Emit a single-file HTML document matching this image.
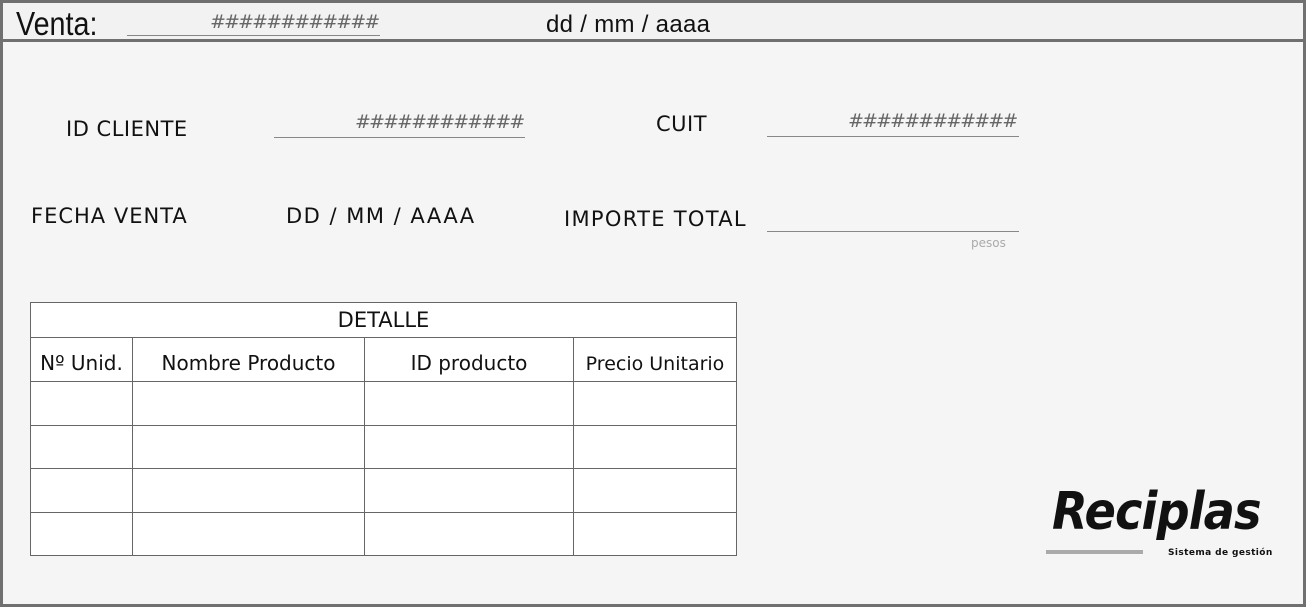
<!DOCTYPE html>
<html><head><meta charset="utf-8"><style>
*{margin:0;padding:0;box-sizing:border-box}
body{width:1306px;height:607px;background:#f5f5f5;font-family:"DejaVu Sans","Liberation Sans",sans-serif;color:#111;position:relative;overflow:hidden}
.frame{position:absolute;left:0;top:0;width:1306px;height:607px;border:3px solid #707070}
.hdr{position:absolute;left:3px;top:3px;width:1300px;height:39px;background:#f2f2f2;border-bottom:3px solid #707070}
.t{position:absolute;white-space:nowrap}
.ln{position:absolute;height:1px;background:#888}
.hash{position:absolute;font-style:italic;color:#666;font-size:19px;white-space:nowrap;letter-spacing:-1.9px}
table{position:absolute;left:30px;top:302px;border-collapse:collapse;font-size:20px}
td{border:1px solid #666;text-align:center;background:#fff;padding:0}
</style></head><body>
<div class="hdr"></div>
<div class="frame"></div>
<div class="t" style="left:16px;top:5px;font-size:33px;font-family:'Liberation Sans',sans-serif;transform:scaleX(0.87);transform-origin:left">Venta:</div>
<div class="ln" style="left:127px;top:35px;width:253px"></div>
<div class="hash" style="left:210px;top:11px">############</div>
<div class="t" style="left:546px;top:11px;font-size:24px;font-family:'Liberation Sans',sans-serif;letter-spacing:0.3px">dd / mm / aaaa</div>

<div class="t" style="left:66px;top:117px;font-size:21px;letter-spacing:0.5px">ID CLIENTE</div>
<div class="ln" style="left:274px;top:137px;width:251px"></div>
<div class="hash" style="left:355px;top:111px">############</div>
<div class="t" style="left:656px;top:112px;font-size:21px;letter-spacing:0.5px">CUIT</div>
<div class="ln" style="left:767px;top:136px;width:252px"></div>
<div class="hash" style="left:848px;top:110px">############</div>

<div class="t" style="left:31px;top:204px;font-size:21px;letter-spacing:1px">FECHA VENTA</div>
<div class="t" style="left:286px;top:204px;font-size:21px;letter-spacing:1.5px">DD / MM / AAAA</div>
<div class="t" style="left:564px;top:207px;font-size:21px;letter-spacing:1.3px">IMPORTE TOTAL</div>
<div class="ln" style="left:767px;top:231px;width:252px"></div>
<div class="t" style="left:971px;top:236px;font-size:12px;color:#aaa">pesos</div>

<table>
<tr style="height:35px"><td colspan="4" style="font-size:21px">DETALLE</td></tr>
<tr style="height:44px"><td style="width:102px;padding-top:6px">Nº Unid.</td><td style="width:232px;padding-top:6px">Nombre Producto</td><td style="width:209px;padding-top:6px">ID producto</td><td style="width:163px;padding-top:8px;font-size:19px">Precio Unitario</td></tr>
<tr style="height:44px"><td></td><td></td><td></td><td></td></tr>
<tr style="height:43px"><td></td><td></td><td></td><td></td></tr>
<tr style="height:44px"><td></td><td></td><td></td><td></td></tr>
<tr style="height:43px"><td></td><td></td><td></td><td></td></tr>
</table>

<div class="t" style="left:1052px;top:482px;font-size:52px;font-weight:bold;font-style:italic;font-family:'DejaVu Sans',sans-serif;letter-spacing:-1px;transform:scaleX(0.89);transform-origin:left">Reciplas</div>
<div style="position:absolute;left:1046px;top:550px;width:97px;height:4px;background:#aaa"></div>
<div class="t" style="left:1168px;top:548px;font-size:9px;font-weight:bold;letter-spacing:0.4px">Sistema de gestión</div>
</body></html>
